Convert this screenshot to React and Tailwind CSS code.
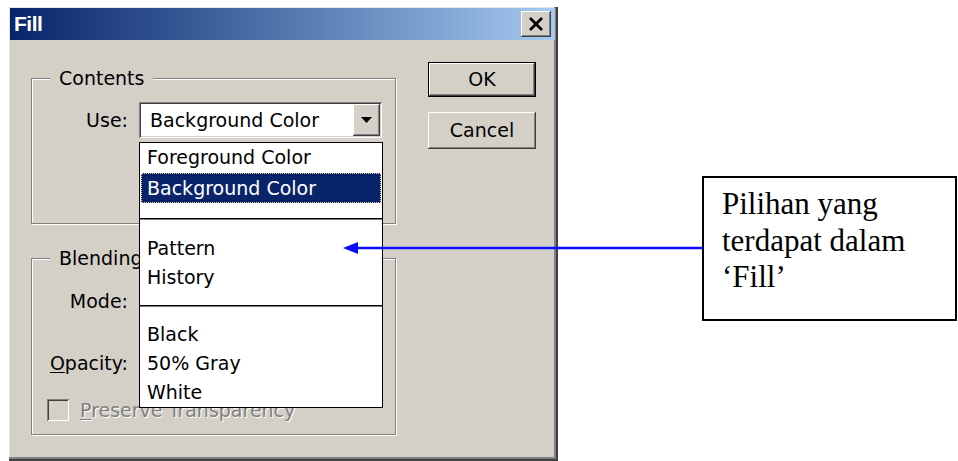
import React from 'react';

// Win2000-style bevels
const raised =
  'shadow-[inset_-1px_-1px_0_#404040,inset_1px_1px_0_#ffffff,inset_-2px_-2px_0_#808080,inset_2px_2px_0_#d4d0c8]';
const sunken =
  'shadow-[inset_1px_1px_0_#808080,inset_-1px_-1px_0_#ffffff,inset_2px_2px_0_#404040,inset_-2px_-2px_0_#d4d0c8]';
const etched =
  'border border-[#808080] shadow-[inset_1px_1px_0_#ffffff,1px_1px_0_#ffffff]';

const fillOptions = [
  { label: 'Foreground Color' },
  { label: 'Background Color', selected: true },
  { separator: true },
  { label: 'Pattern' },
  { label: 'History' },
  { separator: true },
  { label: 'Black' },
  { label: '50% Gray' },
  { label: 'White' },
];

const DropArrow = () => (
  <div className={`flex h-[32px] w-[27px] items-center justify-center bg-[#d4d0c8] ${raised}`}>
    <svg width="11" height="6" viewBox="0 0 11 6">
      <polygon points="0,0 11,0 5.5,6" fill="#000" />
    </svg>
  </div>
);

const OptionList = () => (
  <div className="absolute left-0 top-[40px] z-10 flex h-[266px] w-[244px] flex-col border border-black bg-white">
    {fillOptions.map((opt, i) =>
      opt.separator ? (
        <div key={i} className="flex flex-1 flex-col justify-center">
          <div className="h-[1px] bg-black" />
          <div className="h-[1px] bg-[#808080]" />
        </div>
      ) : opt.selected ? (
        <div key={i} className="flex flex-1 px-[1px] py-[1px]">
          <div className="flex flex-1 items-center border border-dotted border-[#e2d39c] bg-[#0a246a] pl-[5px] text-white">
            {opt.label}
          </div>
        </div>
      ) : (
        <div key={i} className="flex flex-1 items-center pl-[7px] text-black">
          {opt.label}
        </div>
      )
    )}
  </div>
);

const GroupBox = ({ title, className, children }) => (
  <div className={`relative w-[365px] ${etched} ${className}`}>
    <span className="absolute left-[18px] -top-[12px] bg-[#d4d0c8] px-[9px] leading-[22px]">
      {title}
    </span>
    {children}
  </div>
);

const FillDialog = () => (
  <div className="ml-[9px] mt-[7px] h-[454px] w-[549px] shrink-0 bg-[#d4d0c8] shadow-[inset_-2px_-2px_0_#404040,inset_-4px_-4px_0_#808080,inset_1px_1px_0_#e8e6e0] font-['DejaVu_Sans',sans-serif] text-[19px] text-black">
    {/* title bar */}
    <div className="ml-[1px] mt-[1px] flex h-[32px] w-[545px] items-center justify-between bg-gradient-to-r from-[#0a246a] to-[#a6caf0] pl-[4px] pr-[4px]">
      <span className="font-['Liberation_Sans',sans-serif] text-[21px] font-bold tracking-[-0.5px] text-white">Fill</span>
      <div className={`flex h-[26px] w-[30px] items-center justify-center bg-[#d4d0c8] ${raised}`}>
        <svg width="16" height="14" viewBox="0 0 16 14">
          <path d="M2 1 L14 13 M14 1 L2 13" stroke="#000" strokeWidth="2.8" />
        </svg>
      </div>
    </div>

    <div className="flex pl-[22px]">
      <div className="flex w-[366px] flex-col pt-[38px]">
        <GroupBox title="Contents" className="h-[146px]">
          <div className="flex items-center pt-[23px]">
            <span className="w-[96px] text-right">Use:</span>
            <div className="relative ml-[11px]">
              <div className={`flex h-[36px] w-[243px] items-center justify-between bg-white pl-[11px] pr-[2px] ${sunken}`}>
                <span>Background Color</span>
                <DropArrow />
              </div>
              <OptionList />
            </div>
          </div>
        </GroupBox>

        <GroupBox title="Blending" className="mt-[34px] h-[177px]">
          <div className="flex flex-col pt-[24px]">
            <div className="flex h-[36px] items-center">
              <span className="w-[96px] text-right">Mode:</span>
              <div className={`ml-[11px] flex h-[36px] w-[243px] items-center justify-end bg-white pr-[2px] ${sunken}`}>
                <DropArrow />
              </div>
            </div>
            <div className="mt-[26px] flex h-[36px] items-center">
              <span className="w-[96px] text-right">
                <span className="underline underline-offset-2">O</span>pacity:
              </span>
              <div className={`ml-[11px] h-[36px] w-[70px] bg-white ${sunken}`} />
            </div>
            <div className="mt-[17px] flex h-[24px] items-center pl-[15px]">
              <div className={`h-[22px] w-[22px] bg-[#d4d0c8] ${sunken}`} />
              <span className="ml-[11px] text-[#808080] [text-shadow:1px_1px_0_#ffffff]">
                <span className="underline underline-offset-2">P</span>reserve Transparency
              </span>
            </div>
          </div>
        </GroupBox>
      </div>

      <div className="ml-[31px] flex flex-col pt-[22px]">
        <div className="flex h-[35px] w-[108px] border border-black">
          <div className={`flex flex-1 items-center justify-center bg-[#d4d0c8] ${raised}`}>OK</div>
        </div>
        <div className={`mt-[15px] flex h-[37px] w-[108px] items-center justify-center bg-[#d4d0c8] ${raised}`}>
          Cancel
        </div>
      </div>
    </div>
  </div>
);

const Callout = () => (
  <div className="ml-[144px] mt-[176px] h-[145px] w-[255px] shrink-0 border-2 border-black bg-white pl-[18px] pt-[8px] font-['Liberation_Serif',serif] text-[31px] leading-[36.5px] text-black">
    <p>Pilihan yang</p>
    <p>terdapat dalam</p>
    <p>‘Fill’</p>
  </div>
);

export default function App() {
  return (
    <div className="relative h-[461px] w-[958px] overflow-hidden bg-white">
      <div className="flex items-start">
        <FillDialog />
        <Callout />
      </div>
      {/* pointer from the note to the list */}
      <svg className="absolute left-[340px] top-[240px] z-20" width="364" height="16" viewBox="0 0 364 16">
        <line x1="16" y1="8" x2="363" y2="8" stroke="#0a0aff" strokeWidth="2.5" />
        <polygon points="3,8 18,2 18,14" fill="#0a0aff" />
      </svg>
    </div>
  );
}
